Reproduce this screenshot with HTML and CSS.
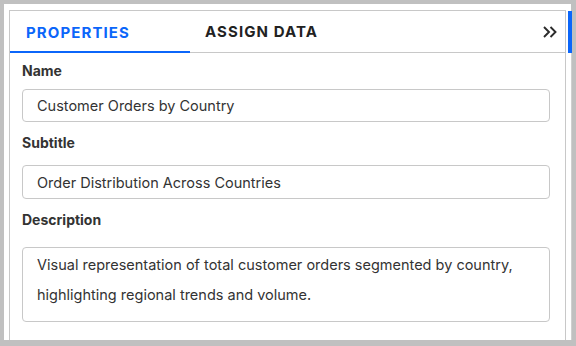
FILE: index.html
```html
<!DOCTYPE html>
<html>
<head>
<meta charset="utf-8">
<link rel="stylesheet" href="styles.css">
</head>
<body>
<div class="frame">
  <div class="panel">
    <div class="tabs">
      <div class="tab active">PROPERTIES</div>
      <div class="tab">ASSIGN DATA</div>
      <svg class="collapse" width="14" height="12" viewBox="0 0 14 12">
        <path d="M1 1 L6 6 L1 11 M7.5 1 L12.5 6 L7.5 11" fill="none" stroke="#2b2b2b" stroke-width="1.9"/>
      </svg>
    </div>
    <div class="form">
      <div class="label first">Name</div>
      <div class="field name">Customer Orders by Country</div>
      <div class="label">Subtitle</div>
      <div class="field sub">Order Distribution Across Countries</div>
      <div class="label">Description</div>
      <div class="field area">Visual representation of total customer orders segmented by country, highlighting regional trends and volume.</div>
    </div>
  </div>
  <div class="scroll"><div class="thumb"></div></div>
</div>
</body>
</html>
```

FILE: styles.css
```css
html, body {
  margin: 0;
  height: 346px;
}
body {
  box-sizing: border-box;
  padding: 4px 5px 6px 4px;
  background: #c0c0c0;
  font-family: Inter, Roboto, "Liberation Sans", sans-serif;
  overflow: hidden;
}
.frame {
  width: 567px;
  height: 336px;
  box-sizing: border-box;
  background: #fff;
  padding: 6px 0 0 5px;
  display: flex;
}
.panel {
  width: 557px;
  flex: none;
  box-sizing: border-box;
  border: 1px solid #c8c8c8;
  border-bottom: none;
  overflow: hidden;
}
.scroll {
  width: 5px;
  margin-left: 1px;
  margin-top: 1px;
  box-sizing: border-box;
  box-shadow: inset -1px 0 0 #cfcfcf;
}
.thumb {
  width: 4px;
  height: 42px;
  margin-left: 1px;
  background: #0b66fa;
}
.tabs {
  display: flex;
  align-items: stretch;
  height: 42px;
  box-sizing: border-box;
  border-bottom: 1px solid #c8c8c8;
}
.tab {
  display: flex;
  align-items: center;
  height: 42px;
  box-sizing: border-box;
  margin-bottom: -1px;
  padding: 0 15px 0 15px;
  font-size: 15px;
  font-weight: 700;
  letter-spacing: 1.1px;
  color: #222;
}
.tab.active {
  width: 180px;
  padding-left: 16px;
  color: #0b66fa;
  border-bottom: 2px solid #0b66fa;
  padding-top: 2px;
}
.tab:not(.active) {
  padding-top: 0;
  padding-bottom: 2px;
}
.collapse {
  align-self: center;
  margin-left: auto;
  margin-right: 8px;
  margin-top: 1px;
}
.form {
  padding: 0 15px 0 12px;
}
.label {
  font-size: 14px;
  font-weight: 700;
  line-height: 20px;
  color: #333;
  margin-top: 11px;
}
.label.first {
  margin-top: 8px;
}
.field {
  box-sizing: border-box;
  border: 1px solid #c8c8c8;
  border-radius: 4px;
  padding: 0 14px;
  font-size: 14.5px;
  color: #333;
  display: flex;
  align-items: center;
}
.field.name {
  height: 33px;
  margin-top: 8px;
}
.field.sub {
  height: 34px;
  margin-top: 12px;
}
.field.area {
  display: block;
  height: 75px;
  margin-top: 17px;
  padding-top: 2px;
  line-height: 30px;
}
```
